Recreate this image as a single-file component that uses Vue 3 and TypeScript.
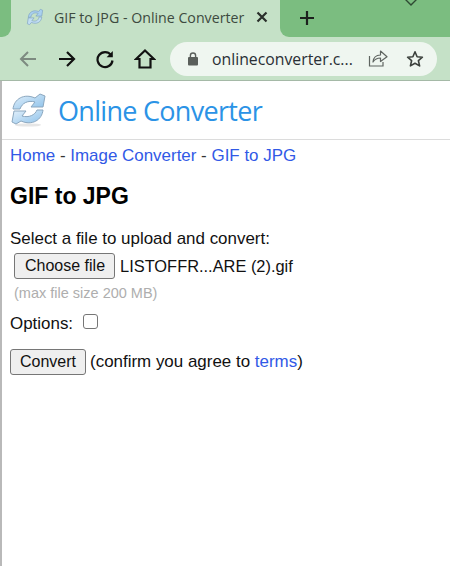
<script setup lang="ts">
const crumbs: string[] = ['Home', 'Image Converter', 'GIF to JPG']
</script>

<template>
  <div class="window">
    <div class="tabstrip">
      <div class="corner"></div>
      <div class="tab">
        <svg class="favicon" width="18" height="18" viewBox="0 0 40 40">
          <path d="M5 21 C6 9 17 3 28 8 L32 3 L37 5 L35 18 L22 18 L27 12 C19 9 12 12 11 20 Z" fill="#a9d0ef" stroke="#7fa3c4" stroke-width="1.5"/>
          <path d="M35 20 C34 32 23 37 12 32 L8 37 L3 35 L5 22 L18 22 L13 28 C21 31 28 28 29 20 Z" fill="#c2def3" stroke="#7fa3c4" stroke-width="1.5"/>
        </svg>
        <span class="tab-title">GIF to JPG - Online Converter</span>
        <svg class="close" width="12" height="12" viewBox="0 0 12 12">
          <path d="M1.5 1.5 L10.5 10.5 M10.5 1.5 L1.5 10.5" stroke="#2a2f2b" stroke-width="2.2" fill="none"/>
        </svg>
      </div>
      <div class="strip-rest">
        <svg class="plus" width="16" height="16" viewBox="0 0 16 16">
          <path d="M8 1 V15 M1 8 H15" stroke="#1c211d" stroke-width="2.2" fill="none"/>
        </svg>
        <svg class="chevron" width="14" height="8" viewBox="0 0 14 8">
          <path d="M1 0 L7 6 L13 0" stroke="#2f4a33" stroke-width="1.4" fill="none"/>
        </svg>
      </div>
    </div>

    <div class="toolbar">
      <svg class="nav" width="20" height="20" viewBox="0 0 20 20">
        <path d="M18 10 H3 M10 3 L3 10 L10 17" stroke="#7d8a80" stroke-width="2" fill="none"/>
      </svg>
      <svg class="nav" width="20" height="20" viewBox="0 0 20 20">
        <path d="M2 10 H17 M10 3 L17 10 L10 17" stroke="#111" stroke-width="2.2" fill="none"/>
      </svg>
      <svg class="nav" width="20" height="20" viewBox="0 0 20 20">
        <path d="M16 6 A7.5 7.5 0 1 0 17.5 11.5" stroke="#111" stroke-width="2.2" fill="none"/>
        <path d="M17.8 2 V8.2 H11.6 Z" fill="#111"/>
      </svg>
      <svg class="nav" width="22" height="22" viewBox="0 0 22 22">
        <path d="M11 2.5 L20 11 H16.5 V19.5 H5.5 V11 H2 Z" stroke="#111" stroke-width="2.2" fill="none" stroke-linejoin="miter"/>
      </svg>
      <div class="omnibox">
        <svg width="10" height="14" viewBox="0 0 10 14">
          <rect x="0" y="5" width="10" height="8.5" rx="1" fill="#5a5f5b"/>
          <path d="M2.4 5.5 V3.6 A2.6 2.6 0 0 1 7.6 3.6 V5.5" stroke="#5a5f5b" stroke-width="1.4" fill="none"/>
        </svg>
        <span class="url">onlineconverter.c...</span>
        <svg class="share" width="20" height="19" viewBox="0 0 20 19">
          <path d="M1.5 7 V17 H15 V13" stroke="#5f6561" stroke-width="1.2" fill="none"/>
          <path d="M5 13 C5.5 8 9 6 12.5 6 V2 L19 7.8 L12.5 12.5 V9 C9.5 9 7 10 5 13 Z" stroke="#5f6561" stroke-width="1.2" fill="none" stroke-linejoin="round"/>
        </svg>
        <svg class="star" width="18" height="18" viewBox="0 0 18 18">
          <path d="M9 1.8 L11.1 6.7 L16.4 7.2 L12.4 10.7 L13.6 15.9 L9 13.2 L4.4 15.9 L5.6 10.7 L1.6 7.2 L6.9 6.7 Z" stroke="#3c413d" stroke-width="1.6" fill="none" stroke-linejoin="round"/>
        </svg>
      </div>
    </div>

    <div class="page">
      <header class="site-header">
        <svg class="logo" width="38" height="36" viewBox="0 0 38 36">
          <defs>
            <linearGradient id="lg" x1="0" y1="0" x2="1" y2="1">
              <stop offset="0" stop-color="#e4f1fb"/>
              <stop offset="1" stop-color="#8cc1ea"/>
            </linearGradient>
          </defs>
          <ellipse cx="18" cy="33" rx="13" ry="1.6" fill="#e6e6e6"/>
          <path d="M3 17 C4 7 14 1 25 6 L30 2 L35 4 L33 15 L21 15 L25 10 C18 8 12 11 10 17 Z" fill="url(#lg)" stroke="#8ba7bf" stroke-width="1"/>
          <path d="M33 18 C32 28 22 34 11 29 L6 32 L2 30 L4 19 L16 19 L12 24 C19 26 25 23 27 18 Z" fill="url(#lg)" stroke="#8ba7bf" stroke-width="1"/>
        </svg>
        <span class="brand">Online Converter</span>
      </header>

      <main class="content">
        <nav class="crumbs">
          <template v-for="(c, i) in crumbs" :key="c">
            <span v-if="i > 0" class="sep"> - </span><a class="link">{{ c }}</a>
          </template>
        </nav>
        <h1 class="title">GIF to JPG</h1>
        <div class="prompt">Select a file to upload and convert:</div>
        <div class="file-row">
          <button class="btn choose" type="button">Choose file</button>
          <span class="filename">LISTOFFR...ARE (2).gif</span>
        </div>
        <div class="hint">(max file size 200 MB)</div>
        <div class="options">
          <span>Options:</span>
          <span class="checkbox"></span>
        </div>
        <div class="submit-row">
          <button class="btn convert" type="button">Convert</button>
          <span class="confirm">(confirm you agree to <a class="link">terms</a>)</span>
        </div>
      </main>
    </div>
  </div>
</template>

<style>
html, body { margin: 0; background: #fff; }
</style>

<style scoped>
.window {
  width: 450px;
  height: 566px;
  overflow: hidden;
  font-family: "Liberation Sans", Arial, sans-serif;
  background: #fff;
}
.tabstrip {
  height: 37px;
  background: #c5e1c7;
  display: flex;
  align-items: stretch;
}
.corner {
  width: 11px;
  flex: none;
  background: #7bbd80;
  border-bottom-right-radius: 9px;
}
.tab {
  width: 269px;
  flex: none;
  display: flex;
  align-items: center;
  padding: 0 12px 3px 15px;
  box-sizing: border-box;
}
.favicon { flex: none; }
.tab-title {
  margin-left: 10px;
  font: 14.2px "Open Sans", sans-serif;
  color: #3d4a40;
  white-space: nowrap;
  flex: 1;
}
.close { flex: none; }
.strip-rest {
  flex: 1;
  background: #7bbd80;
  border-bottom-left-radius: 9px;
  display: flex;
  align-items: center;
  position: relative;
}
.plus {
  margin: -2px 0 0 19px;
}
.chevron {
  position: absolute;
  left: 124px;
  top: -1px;
}
.toolbar {
  height: 43px;
  background: #c5e1c7;
  border-bottom: 1px solid #a5b9a7;
  display: flex;
  align-items: center;
  padding: 0 13px 0 18px;
}
.nav { flex: none; margin-right: 18.5px; }
.omnibox {
  flex: 1;
  height: 34px;
  margin-left: -4px;
  border-radius: 17px;
  background: #eff6f0;
  display: flex;
  align-items: center;
  padding: 0 13px 0 18px;
}
.url {
  margin-left: 14px;
  font: 15.8px "Open Sans", sans-serif;
  color: #2a2f35;
  white-space: nowrap;
  flex: 1;
}
.share { margin-right: 18px; }
.page {
  height: 485px;
  border-left: 2px solid #b9b9b9;
}
.site-header {
  height: 58px;
  border-bottom: 1px solid #dcdcdc;
  display: flex;
  align-items: center;
  padding-left: 8px;
}
.logo { flex: none; }
.brand {
  margin-left: 10px;
  font: 27px "Open Sans", sans-serif;
  letter-spacing: -0.7px;
  color: #2b93e6;
}
.content {
  padding: 6px 0 0 8px;
  font-size: 16.95px;
  color: #111;
}
.crumbs { line-height: 20px; }
.link { color: #3159e6; }
.sep { color: #333; white-space: pre; }
.title {
  margin: 17px 0 0;
  font-size: 23px;
  line-height: 26px;
  font-weight: 700;
  color: #000;
}
.prompt {
  margin-top: 20px;
  line-height: 19px;
}
.file-row {
  display: flex;
  align-items: center;
  margin: 5px 0 0 4px;
}
.btn {
  font: 16px "Liberation Sans", Arial, sans-serif;
  color: #111;
  background: #efefef;
  border: 1px solid #767676;
  border-radius: 3px;
  height: 26px;
  padding: 0 9px;
  box-sizing: border-box;
}
.choose { padding: 0 9px 0 10px; }
.filename { margin-left: 5px; font-size: 16.4px; }
.hint {
  margin: 6px 0 0 4px;
  font-size: 14.5px;
  line-height: 17px;
  color: #aeaeae;
}
.options {
  display: flex;
  align-items: center;
  margin-top: 12px;
  line-height: 19px;
}
.checkbox {
  width: 15px;
  height: 15px;
  margin: -5px 0 0 10px;
  border: 1px solid #767676;
  border-radius: 3px;
  box-sizing: border-box;
  background: #fff;
}
.submit-row {
  display: flex;
  align-items: center;
  margin-top: 16px;
}
.confirm { margin-left: 4px; }
</style>
